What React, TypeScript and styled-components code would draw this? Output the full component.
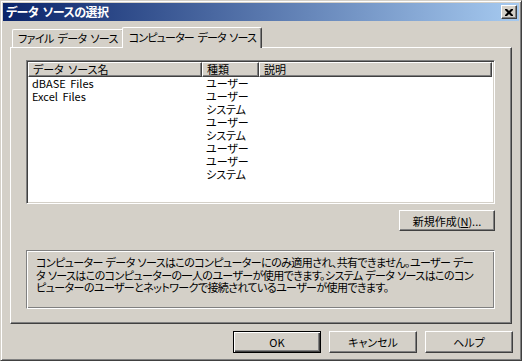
import React from 'react'
import styled, { createGlobalStyle } from 'styled-components'

const GlobalStyle = createGlobalStyle`
  html, body {
    margin: 0;
    padding: 0;
    background: #d4d0c8;
  }
  body {
    font-family: "Noto Sans CJK JP", "Liberation Sans", sans-serif;
    font-size: 11px;
    font-feature-settings: "palt";
    word-spacing: 2px;
    color: #000;
  }
`

const Window = styled.div`
  width: 522px;
  height: 361px;
  box-sizing: border-box;
  background: #d4d0c8;
  border: 1px solid;
  border-color: #d4d0c8 #404040 #404040 #d4d0c8;
  box-shadow: inset 1px 1px #fff, inset -1px -1px #808080;
  padding: 2px;
  display: flex;
  flex-direction: column;
`

const TitleBar = styled.div`
  height: 18px;
  display: flex;
  align-items: center;
  justify-content: space-between;
  padding: 0 2px 0 3px;
  background: linear-gradient(to right, #0a246a, #a6caf0);
`

const TitleText = styled.span`
  color: #fff;
  font-weight: bold;
  font-size: 12px;
  line-height: 18px;
  letter-spacing: -0.5px;
`

const CloseBtn = styled.div`
  width: 16px;
  height: 14px;
  box-sizing: border-box;
  background: #d4d0c8;
  border: 1px solid;
  border-color: #fff #404040 #404040 #fff;
  box-shadow: inset -1px -1px #808080;
  display: flex;
  align-items: center;
  justify-content: center;
`

const Body = styled.div`
  display: flex;
  flex-direction: column;
  padding: 6px 6px 0 7px;
`

const TabRow = styled.div`
  display: flex;
  align-items: flex-end;
  height: 20px;
  padding-left: 2px;
  position: relative;
  z-index: 1;
`

const Tab = styled.div<{ $active?: boolean }>`
  box-sizing: border-box;
  height: ${(p) => (p.$active ? '21px' : '18px')};
  margin: ${(p) => (p.$active ? '0 -2px -1px -2px' : '0')};
  padding: ${(p) => (p.$active ? '1px 5px 0 6px' : '0 5px 0 5px')};
  background: #d4d0c8;
  border-top: 1px solid #fff;
  border-left: 1px solid #fff;
  border-right: 1px solid #404040;
  box-shadow: inset -1px 0 #808080;
  border-radius: 2px 2px 0 0;
  line-height: 16px;
  letter-spacing: ${(p) => (p.$active ? '-0.85px' : '-0.6px')};
  white-space: nowrap;
`

const Panel = styled.div`
  height: 277px;
  margin-right: 1px;
  box-sizing: border-box;
  border: 1px solid;
  border-color: #fff #404040 #404040 #fff;
  box-shadow: inset -1px -1px #808080;
  padding: 12px 16px 0 15px;
  display: flex;
  flex-direction: column;
`

const ListView = styled.div`
  height: 144px;
  box-sizing: border-box;
  background: #fff;
  border: 1px solid;
  border-color: #808080 #fff #fff #808080;
  box-shadow: inset 1px 1px #404040, inset -1px -1px #d4d0c8;
  padding: 1px;
  overflow: hidden;
`

const Grid = styled.div`
  display: grid;
  grid-template-columns: 174px 57px 233px;
`

const HeaderCell = styled.div`
  height: 15px;
  box-sizing: border-box;
  background: #d4d0c8;
  border: 1px solid;
  border-color: #fff #404040 #404040 #fff;
  box-shadow: inset -1px -1px #808080;
  padding-left: 4px;
  line-height: 13px;
  white-space: nowrap;
`

const Cell = styled.div`
  height: 13px;
  line-height: 13px;
  padding-left: 4px;
  white-space: nowrap;
`

const RightRow = styled.div`
  display: flex;
  justify-content: flex-end;
  margin-top: 6px;
`

const Button = styled.div<{ $w: number; $h: number; $default?: boolean }>`
  width: ${(p) => p.$w}px;
  height: ${(p) => p.$h}px;
  box-sizing: border-box;
  background: #d4d0c8;
  border: 1px solid;
  border-color: ${(p) => (p.$default ? '#000' : '#fff #404040 #404040 #fff')};
  box-shadow: ${(p) =>
    p.$default
      ? 'inset 1px 1px #fff, inset -1px -1px #404040, inset -2px -2px #808080'
      : 'inset -1px -1px #808080'};
  display: flex;
  align-items: center;
  justify-content: center;
  white-space: nowrap;
`

const Underline = styled.span`
  text-decoration: underline;
`

const GroupBox = styled.div`
  margin-top: 19px;
  height: 59px;
  box-sizing: border-box;
  border: 1px solid;
  border-color: #808080 #fff #fff #808080;
  box-shadow: inset 1px 1px #fff, inset -1px -1px #808080;
  padding: 5px 8px 0 9px;
  line-height: 12.5px;
  letter-spacing: -0.6px;
  word-spacing: 1px;
  white-space: nowrap;
  overflow: hidden;
`

const Footer = styled.div`
  display: flex;
  justify-content: flex-end;
  gap: 8px;
  margin-top: 7px;
`

const rows: [string, string][] = [
  ['dBASE Files', 'ユーザー'],
  ['Excel Files', 'ユーザー'],
  ['', 'システム'],
  ['', 'ユーザー'],
  ['', 'システム'],
  ['', 'ユーザー'],
  ['', 'ユーザー'],
  ['', 'システム'],
]

const App = () => {
  return (
    <Window>
      <GlobalStyle />
      <TitleBar>
        <TitleText>データ ソースの選択</TitleText>
        <CloseBtn>
          <svg width="8" height="7" viewBox="0 0 8 7">
            <path d="M0 0h2l2 2 2-2h2v1l-2.5 2.5L8 6v1H6L4 5 2 7H0V6l2.5-2.5L0 1z" fill="#000" />
          </svg>
        </CloseBtn>
      </TitleBar>
      <Body>
        <TabRow>
          <Tab>ファイル データ ソース</Tab>
          <Tab $active>コンピューター データ ソース</Tab>
        </TabRow>
        <Panel>
          <ListView>
            <Grid>
              <HeaderCell>データ ソース名</HeaderCell>
              <HeaderCell>種類</HeaderCell>
              <HeaderCell>説明</HeaderCell>
              {rows.map(([name, type], i) => (
                <React.Fragment key={i}>
                  <Cell>{name}</Cell>
                  <Cell>{type}</Cell>
                  <Cell />
                </React.Fragment>
              ))}
            </Grid>
          </ListView>
          <RightRow>
            <Button $w={96} $h={21}>
              新規作成(<Underline>N</Underline>)...
            </Button>
          </RightRow>
          <GroupBox>
            コンピューター データ ソースはこのコンピューターにのみ適用され、共有できません。ユーザー デー
            <br />
            タ ソースはこのコンピューターの一人のユーザーが使用できます。システム データ ソースはこのコン
            <br />
            ピューターのユーザーとネットワークで接続されているユーザーが使用できます。
          </GroupBox>
        </Panel>
        <Footer>
          <Button $w={88} $h={22} $default>
            OK
          </Button>
          <Button $w={88} $h={22}>
            キャンセル
          </Button>
          <Button $w={88} $h={22}>
            ヘルプ
          </Button>
        </Footer>
      </Body>
    </Window>
  )
}

export default App
